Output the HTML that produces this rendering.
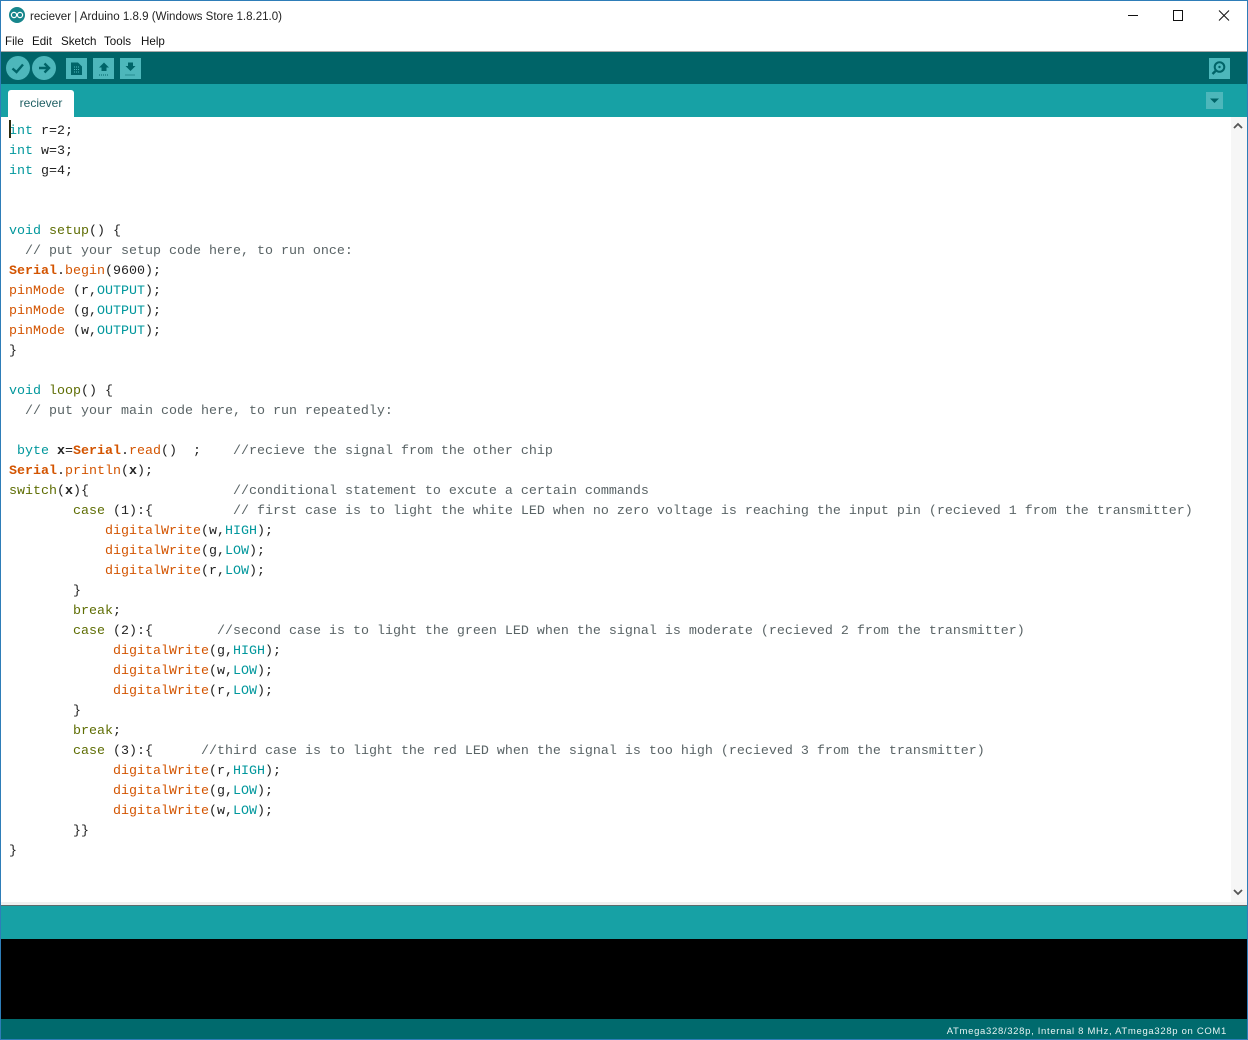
<!DOCTYPE html>
<html><head><meta charset="utf-8"><title>reciever | Arduino 1.8.9</title>
<style>
html,body{margin:0;padding:0;width:1248px;height:1040px;overflow:hidden;background:#fff}
body{position:relative;font-family:"Liberation Sans",sans-serif}
div,pre,svg{position:absolute}
#frame{left:0;top:0;width:1246px;height:1038px;border:1px solid #2e7db8;z-index:9;pointer-events:none}
#title{left:30px;top:9px;font-size:11.55px;line-height:16px;color:#222;white-space:pre}
#menu{left:0;top:34px;font-size:11.6px;line-height:16px;color:#111}
#menu span{position:absolute;top:0}
#toolbar{left:1px;top:52px;width:1246px;height:32px;background:#006468}
#tabbar{left:1px;top:84px;width:1246px;height:33px;background:#17a1a5}
#tab{left:8px;top:90px;width:66px;height:27px;background:#fff;border-radius:3px 3px 0 0;color:#1f5f63;font-size:12px;line-height:26px;text-align:center}
#sep{left:1px;top:51px;width:1246px;height:1px;background:#a9a9a9}
pre{left:9px;top:122px;margin:0;font-family:"Liberation Mono",monospace;font-size:13.333px;line-height:20px;color:#222;z-index:2}
.t{color:#00979c}.f{color:#d35400}.k{color:#5e6d03}.b{font-weight:bold}.c{color:#5a6466}
#caret{left:9px;top:120px;width:2px;height:18px;background:#2b2b10;z-index:3}
#scroll{left:1231px;top:117px;width:16px;height:785px;background:#f6f6f6}
#status{left:1px;top:906px;width:1246px;height:33px;background:#17a1a5}
#edge{left:1px;top:905px;width:1246px;height:1px;background:#5b6b6c}
#edge2{left:1px;top:902px;width:1246px;height:3px;background:#f0f0f0}
#console{left:1px;top:939px;width:1246px;height:80px;background:#000}
#foot{left:1px;top:1019px;width:1246px;height:20px;background:#006a6d}
#foottxt{right:21px;top:1026px;font-size:9.5px;line-height:12px;letter-spacing:.68px;color:#e6f2f2;z-index:4;white-space:pre}
</style></head><body>
<div id="frame"></div>

<svg style="left:9px;top:7px" width="16" height="16" viewBox="0 0 16 16"><circle cx="8" cy="8" r="8" fill="#17868c"/><circle cx="5" cy="8" r="2.6" fill="none" stroke="#fff" stroke-width="1.2"/><circle cx="11" cy="8" r="2.6" fill="none" stroke="#fff" stroke-width="1.2"/></svg>
<div id="title">reciever | Arduino 1.8.9 (Windows Store 1.8.21.0)</div>
<svg style="left:1128px;top:10px" width="102" height="12" viewBox="0 0 102 12" fill="none" stroke="#111" stroke-width="1"><path d="M0 5.500H10"/><path d="M45.500 .5H54.500V10.500H45.500Z"/><path d="M91 .5L101 10.500M101 .5L91 10.500"/></svg>

<div id="menu"><span style="left:5px">File</span><span style="left:32px">Edit</span><span style="left:61px">Sketch</span><span style="left:104px">Tools</span><span style="left:141px">Help</span></div>
<div id="sep"></div>

<div id="toolbar"></div>
<svg style="left:0;top:52px;z-index:2" width="1248" height="32" viewBox="0 0 1248 32">
<circle cx="18" cy="16" r="12" fill="#4db7bb"/><path d="M12.500 16.500L16.500 20L23 12.500" fill="none" stroke="#006468" stroke-width="2.400"/>
<circle cx="44" cy="16" r="12" fill="#4db7bb"/><path d="M39 16H48M44.500 11.500L49 16L44.500 20.500" fill="none" stroke="#006468" stroke-width="2.400"/>
<rect x="66" y="6" width="21" height="21" fill="#4db7bb"/><path d="M71 10.500H78L82 14.500V23H71Z" fill="#006468"/><path d="M74 15h6M74 17.500h6M74 20h6" stroke="#4db7bb" stroke-width="1" stroke-dasharray="1 1"/>
<rect x="93" y="6" width="21" height="21" fill="#4db7bb"/><path d="M104 10.500L109 15.500H106.500V19H101.500V15.500H99Z" fill="#006468"/><path d="M99 23H109" stroke="#006468" stroke-dasharray="1 1"/>
<rect x="120" y="6" width="21" height="21" fill="#4db7bb"/><path d="M130.500 19L125.500 14H128V10.500H133V14H135.500Z" fill="#006468"/><path d="M125.500 23H135.500" stroke="#006468" stroke-dasharray="1 1"/>
<rect x="1209" y="6" width="21" height="21" fill="#4db7bb"/><circle cx="1219.500" cy="15" r="4.800" fill="none" stroke="#006468" stroke-width="2"/><circle cx="1219.500" cy="15" r="1.200" fill="#006468"/><path d="M1215.500 19L1212.500 22" stroke="#006468" stroke-width="2.400"/>
</svg>

<div id="tabbar"></div>
<div id="tab">reciever</div>
<svg style="left:1206px;top:92px" width="17" height="17" viewBox="0 0 17 17"><rect width="17" height="17" fill="#4db7bb"/><path d="M4 6.500H13L8.500 11Z" fill="#006468"/></svg>

<div id="caret"></div>
<pre><span class="t">int</span> r=2;
<span class="t">int</span> w=3;
<span class="t">int</span> g=4;


<span class="t">void</span> <span class="k">setup</span>() {
  <span class="c">// put your setup code here, to run once:</span>
<span class="f b">Serial</span>.<span class="f">begin</span>(9600);
<span class="f">pinMode</span> (r,<span class="t">OUTPUT</span>);
<span class="f">pinMode</span> (g,<span class="t">OUTPUT</span>);
<span class="f">pinMode</span> (w,<span class="t">OUTPUT</span>);
}

<span class="t">void</span> <span class="k">loop</span>() {
  <span class="c">// put your main code here, to run repeatedly:</span>

 <span class="t">byte</span> <span class="b">x</span>=<span class="f b">Serial</span>.<span class="f">read</span>()  ;    <span class="c">//recieve the signal from the other chip</span>
<span class="f b">Serial</span>.<span class="f">println</span>(<span class="b">x</span>);
<span class="k">switch</span>(<span class="b">x</span>){                  <span class="c">//conditional statement to excute a certain commands</span>
        <span class="k">case</span> (1):{          <span class="c">// first case is to light the white LED when no zero voltage is reaching the input pin (recieved 1 from the transmitter)</span>
            <span class="f">digitalWrite</span>(w,<span class="t">HIGH</span>);
            <span class="f">digitalWrite</span>(g,<span class="t">LOW</span>);
            <span class="f">digitalWrite</span>(r,<span class="t">LOW</span>);
        }
        <span class="k">break</span>;
        <span class="k">case</span> (2):{        <span class="c">//second case is to light the green LED when the signal is moderate (recieved 2 from the transmitter)</span>
             <span class="f">digitalWrite</span>(g,<span class="t">HIGH</span>);
             <span class="f">digitalWrite</span>(w,<span class="t">LOW</span>);
             <span class="f">digitalWrite</span>(r,<span class="t">LOW</span>);
        }
        <span class="k">break</span>;
        <span class="k">case</span> (3):{      <span class="c">//third case is to light the red LED when the signal is too high (recieved 3 from the transmitter)</span>
             <span class="f">digitalWrite</span>(r,<span class="t">HIGH</span>);
             <span class="f">digitalWrite</span>(g,<span class="t">LOW</span>);
             <span class="f">digitalWrite</span>(w,<span class="t">LOW</span>);
        }}
}</pre>

<div id="edge2"></div>
<div id="scroll"></div>
<svg style="left:1231px;top:117px;z-index:2" width="16" height="788" viewBox="0 0 16 788" fill="none" stroke="#555" stroke-width="1.800"><path d="M3 11L7 7L11 11"/><path d="M3 773L7 777L11 773"/></svg>

<div id="edge"></div>
<div id="status"></div>
<div id="console"></div>
<div id="foot"></div>
<div id="foottxt">ATmega328/328p, Internal 8 MHz, ATmega328p on COM1</div>
</body></html>
